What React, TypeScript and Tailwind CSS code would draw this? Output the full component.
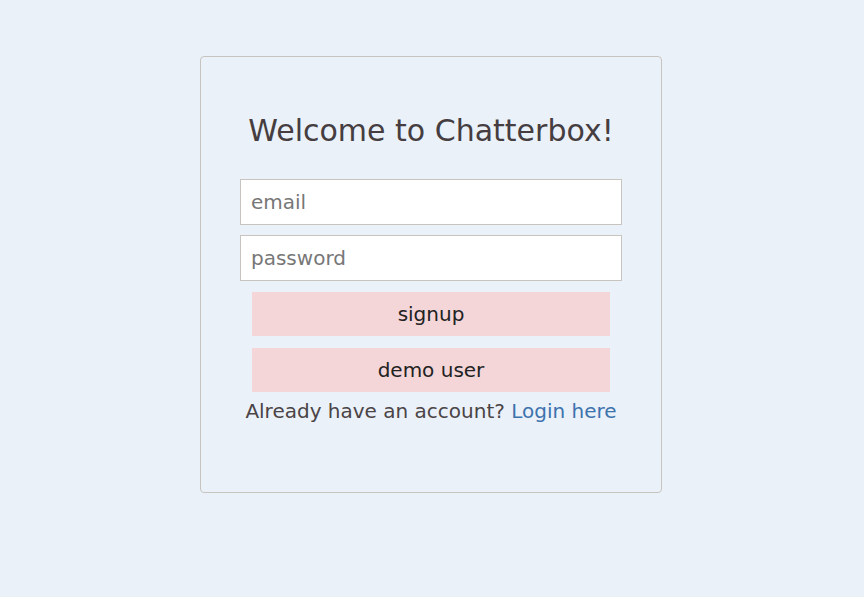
import React from 'react';

export default function App() {
  return (
    <div className="min-h-screen w-full bg-[#eaf1f9] flex justify-center pt-[56px] pr-[2px] font-['DejaVu_Sans',sans-serif]">
      <div className="w-[462px] h-[437px] border border-[#c7c4bf] rounded-[4px] flex flex-col items-center pt-[54px]">
        <h1 className="text-[30px] leading-[40px] text-[#453d3f]">Welcome to Chatterbox!</h1>
        <form className="w-[382px] mt-[28px] flex flex-col items-center" onSubmit={e => e.preventDefault()}>
          <input
            type="text"
            placeholder="email"
            className="w-full h-[46px] bg-white border border-[#c7c4bf] px-[10px] text-[20px] text-[#333] placeholder:text-[#777] outline-none"
          />
          <input
            type="password"
            placeholder="password"
            className="w-full h-[46px] mt-[10px] bg-white border border-[#c7c4bf] px-[10px] text-[20px] text-[#333] placeholder:text-[#777] outline-none"
          />
          <button className="w-[358px] h-[44px] mt-[11px] bg-[#f4d6d9] text-[20px] text-[#222]">signup</button>
          <button className="w-[358px] h-[44px] mt-[12px] bg-[#f4d6d9] text-[20px] text-[#222]">demo user</button>
          <p className="mt-[5px] text-[20px] leading-[28px] text-[#4a4446]">
            Already have an account? <a href="#" className="text-[#3d73ad]">Login here</a>
          </p>
        </form>
      </div>
    </div>
  );
}
